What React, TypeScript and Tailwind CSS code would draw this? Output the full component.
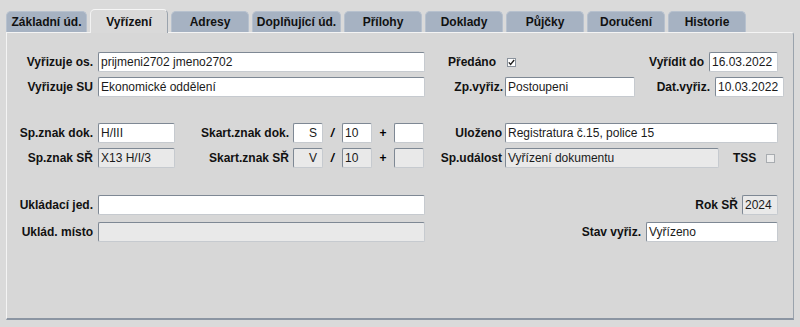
import type { ReactNode } from 'react';

const tabs = [
  { name: 'Základní úd.', w: 'w-[81px]' },
  { name: 'Vyřízení', w: 'w-[78px]', active: true },
  { name: 'Adresy', w: 'w-[78px]' },
  { name: 'Doplňující úd.', w: 'w-[89px]' },
  { name: 'Přílohy', w: 'w-[78px]' },
  { name: 'Doklady', w: 'w-[78px]' },
  { name: 'Půjčky', w: 'w-[78px]' },
  { name: 'Doručení', w: 'w-[78px]' },
  { name: 'Historie', w: 'w-[78px]' },
];

function Field({ w, value = '', disabled = false, right = false }: { w: string; value?: string; disabled?: boolean; right?: boolean }) {
  return (
    <div
      className={`${w} h-[20px] shrink-0 rounded-[2px] border border-t-[#7e8894] border-l-[#7e8894] border-r-[#c6cacf] border-b-[#c6cacf] px-[2px] leading-[18px] text-[12px] text-[#1a1a1a] whitespace-nowrap overflow-hidden ${
        disabled ? 'bg-[#e9e9e9]' : 'bg-white'
      } ${right ? 'text-right pr-[5px]' : ''}`}
    >
      {value}
    </div>
  );
}

function Label({ w, children, pr = 'pr-[5px]' }: { w: string; children: ReactNode; pr?: string }) {
  return <div className={`${w} ${pr} shrink-0 text-right font-bold text-[12px] text-[#111] whitespace-nowrap`}>{children}</div>;
}

function Check({ checked, disabled }: { checked?: boolean; disabled?: boolean }) {
  return (
    <div
      className={`w-[9px] h-[9px] shrink-0 border flex items-center justify-center ${
        disabled ? 'border-[#a8acb0] bg-[#ececec]' : 'border-[#8a929c] bg-white'
      }`}
    >
      {checked && (
        <svg width="7" height="7" viewBox="0 0 7 7">
          <path d="M0.8 3.4 L2.6 5.4 L6.2 1" fill="none" stroke="#222" strokeWidth="1.4" />
        </svg>
      )}
    </div>
  );
}

export default function App() {
  return (
    <div className="w-[800px] h-[327px] bg-[#dadada] pt-[9px] px-[6px] font-['Liberation_Sans',Arial,sans-serif] text-[12px]">
      {/* Tab strip */}
      <div className="flex items-end gap-[3px] h-[23px]">
        {tabs.map(t =>
          t.active ? (
            <div
              key={t.name}
              className={`${t.w} h-[24px] -mb-px relative z-10 rounded-t-[5px] bg-[#d9d9d9] border border-b-0 border-t-[#f6f6f6] border-l-[#f2f2f2] border-r-[#9aa3ad] flex items-center justify-center font-bold text-[#111]`}
            >
              {t.name}
            </div>
          ) : (
            <div
              key={t.name}
              className={`${t.w} h-[21px] rounded-t-[5px] bg-[#a6b2c2] border border-b-0 border-[#b7c1ce] flex items-center justify-center font-bold text-[#111]`}
            >
              {t.name}
            </div>
          )
        )}
      </div>

      {/* Panel */}
      <div className="w-[788px] h-[288px] bg-[#d7d7d7] border border-t-[#f4f4f4] border-l-[#f4f4f4] border-r-[#9aa3ad] border-b-2 border-b-[#8b95a2] rounded-tr-[3px] pt-[19px] flex flex-col">
        {/* Row 1 */}
        <div className="flex items-center h-[20px]">
          <Label w="w-[91px]">Vyřizuje os.</Label>
          <Field w="w-[327px]" value="prijmeni2702 jmeno2702" />
          <div className="ml-[23px] font-bold text-[#111]">Předáno</div>
          <div className="ml-[11px]">
            <Check checked />
          </div>
          <div className="ml-auto mr-[15px] flex items-center">
            <Label w="w-[80px]">Vyřídit do</Label>
            <Field w="w-[69px]" value="16.03.2022" />
          </div>
        </div>

        {/* Row 2 */}
        <div className="flex items-center h-[20px] mt-[5px]">
          <Label w="w-[91px]">Vyřizuje SU</Label>
          <Field w="w-[327px]" value="Ekonomické oddělení" />
          <Label w="w-[80px]" pr="pr-[2px]">Zp.vyřiz.</Label>
          <Field w="w-[130px]" value="Postoupeni" />
          <div className="ml-auto mr-[15px] flex items-center">
            <Label w="w-[80px]">Dat.vyřiz.</Label>
            <Field w="w-[69px]" value="10.03.2022" />
          </div>
        </div>

        {/* Row 3 */}
        <div className="flex items-center h-[20px] mt-[26px]">
          <Label w="w-[91px]">Sp.znak dok.</Label>
          <Field w="w-[77px]" value="H/III" />
          <Label w="w-[118px]" pr="pr-[4px]">Skart.znak dok.</Label>
          <Field w="w-[30px]" value="S" right />
          <div className="w-[19px] text-center font-bold italic">/</div>
          <Field w="w-[30px]" value="10" />
          <div className="w-[22px] text-center font-bold">+</div>
          <Field w="w-[30px]" />
          <Label w="w-[81px]" pr="pr-[3px]">Uloženo</Label>
          <Field w="w-[273px]" value="Registratura č.15, police 15" />
        </div>

        {/* Row 4 */}
        <div className="flex items-center h-[20px] mt-[5px]">
          <Label w="w-[91px]">Sp.znak SŘ</Label>
          <Field w="w-[77px]" value="X13 H/I/3" disabled />
          <Label w="w-[118px]" pr="pr-[4px]">Skart.znak SŘ</Label>
          <Field w="w-[30px]" value="V" right disabled />
          <div className="w-[19px] text-center font-bold italic">/</div>
          <Field w="w-[30px]" value="10" disabled />
          <div className="w-[22px] text-center font-bold">+</div>
          <Field w="w-[30px]" disabled />
          <Label w="w-[81px]" pr="pr-[3px]">Sp.událost</Label>
          <Field w="w-[214px]" value="Vyřízení dokumentu" disabled />
          <div className="ml-[14px] font-bold text-[#111]">TSS</div>
          <div className="ml-[10px]">
            <Check disabled />
          </div>
        </div>

        {/* Row 5 */}
        <div className="flex items-center h-[20px] mt-[27px]">
          <Label w="w-[91px]">Ukládací jed.</Label>
          <Field w="w-[327px]" />
          <div className="ml-auto mr-[15px] flex items-center">
            <Label w="w-[60px]" pr="pr-[4px]">Rok SŘ</Label>
            <Field w="w-[36px]" value="2024" disabled />
          </div>
        </div>

        {/* Row 6 */}
        <div className="flex items-center h-[20px] mt-[7px]">
          <Label w="w-[91px]">Uklád. místo</Label>
          <Field w="w-[327px]" disabled />
          <div className="ml-auto mr-[15px] flex items-center">
            <Label w="w-[80px]">Stav vyřiz.</Label>
            <Field w="w-[132px]" value="Vyřízeno" />
          </div>
        </div>
      </div>
    </div>
  );
}
